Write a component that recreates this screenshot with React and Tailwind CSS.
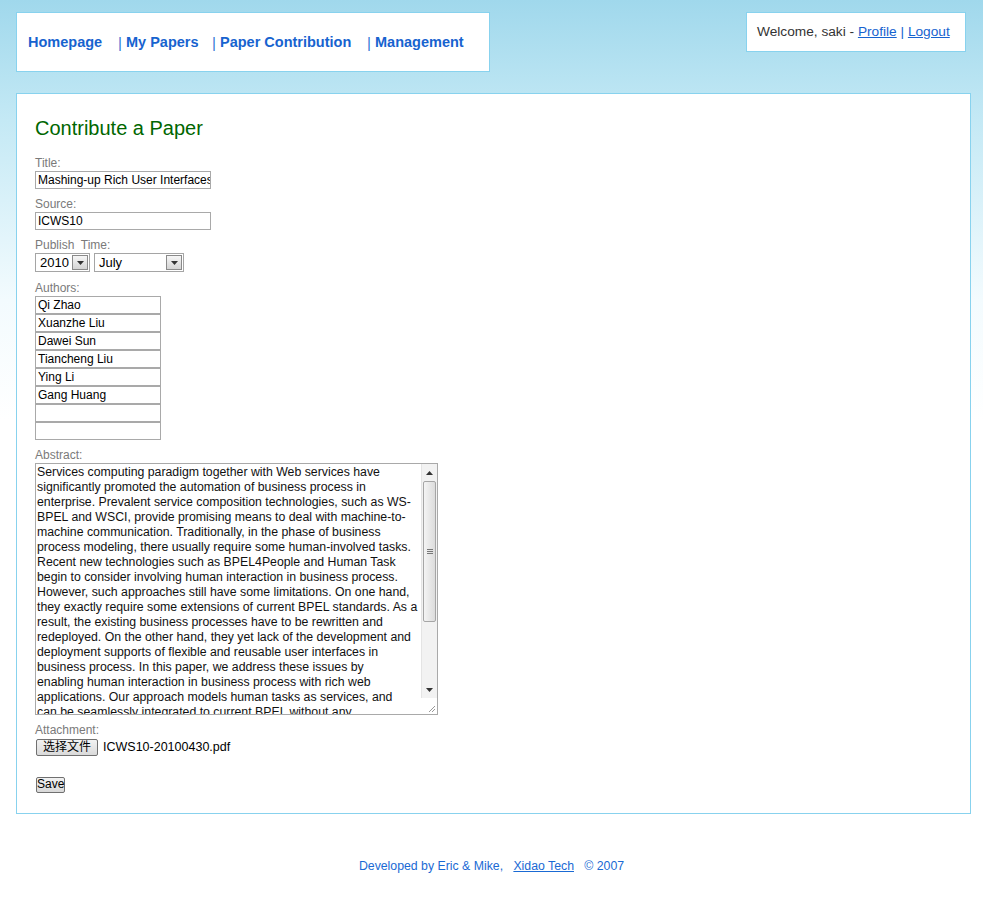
import React from "react";

const abstractLines = [
  "Services computing paradigm together with Web services have",
  "significantly promoted the automation of business process in",
  "enterprise. Prevalent service composition technologies, such as WS-",
  "BPEL and WSCI, provide promising means to deal with machine-to-",
  "machine communication. Traditionally, in the phase of business",
  "process modeling, there usually require some human-involved tasks.",
  "Recent new technologies such as BPEL4People and Human Task",
  "begin to consider involving human interaction in business process.",
  "However, such approaches still have some limitations. On one hand,",
  "they exactly require some extensions of current BPEL standards. As a",
  "result, the existing business processes have to be rewritten and",
  "redeployed. On the other hand, they yet lack of the development and",
  "deployment supports of flexible and reusable user interfaces in",
  "business process. In this paper, we address these issues by",
  "enabling human interaction in business process with rich web",
  "applications. Our approach models human tasks as services, and",
  "can be seamlessly integrated to current BPEL without any",
];

const authors = ["Qi Zhao", "Xuanzhe Liu", "Dawei Sun", "Tiancheng Liu", "Ying Li", "Gang Huang", "", ""];

const font = "font-['Liberation_Sans',Arial,'Noto_Sans_CJK_SC',sans-serif]";

// small label above each field
const Label = ({ children }) => (
  <div className="h-[16px] leading-[16px] text-[12px] text-[#7a7a7a]">{children}</div>
);

const TextBox = ({ value, w = "w-[176px]" }) => (
  <div className={`${w} h-[18px] border border-[#a9a9a9] bg-white pl-[2px] text-[12px] leading-[16px] text-black whitespace-nowrap overflow-hidden`}>
    {value}
  </div>
);

const Arrow = ({ up }) => (
  <svg width="7" height="4" viewBox="0 0 7 4">
    <path d={up ? "M0 4 L3.5 0 L7 4 Z" : "M0 0 L3.5 4 L7 0 Z"} fill="#333" />
  </svg>
);

const Select = ({ value, w }) => (
  <div className={`${w} h-[19px] border border-[#a5a5a5] bg-white flex items-center justify-between pl-[4px] pr-[1px]`}>
    <span className="text-[13px] leading-[17px] text-black">{value}</span>
    <div className="w-[16px] h-[15px] border border-[#8a8a8a] bg-[linear-gradient(#f6f6f6,#d4d4d4)] flex items-center justify-center">
      <Arrow />
    </div>
  </div>
);

const NavItem = ({ label, sep, w }) => (
  <div className={`${w} flex items-center`}>
    {sep && <span className="text-[15px] font-normal text-[#2f74d6] w-[8px]">|</span>}
    <a className="text-[14.5px] font-bold text-[#1763cf]">{label}</a>
  </div>
);

export default function App() {
  return (
    <div className={`${font} min-h-screen bg-[linear-gradient(to_bottom,#a0d8ec_0px,#c4e9f5_120px,#f3fbfe_300px,#ffffff_420px)] pt-[12px]`}>
      <div className="pl-[16px]">
        {/* top bar */}
        <div className="w-[950px] flex justify-between items-start">
          <div className="w-[474px] h-[60px] bg-white border border-[#88d2ee] flex items-center pl-[11px] pt-[2px]">
            <NavItem label="Homepage" w="w-[90px]" />
            <NavItem label="My Papers" sep w="w-[94px]" />
            <NavItem label="Paper Contribution" sep w="w-[155px]" />
            <NavItem label="Management" sep w="w-[110px]" />
          </div>
          <div className="w-[220px] h-[40px] bg-white border border-[#88d2ee] flex items-center pl-[10px] text-[13.7px] text-[#333]">
            <span>Welcome, saki -&nbsp;</span>
            <a className="underline text-[#1763cf]">Profile</a>
            <span className="text-[#1763cf]">&nbsp;|&nbsp;</span>
            <a className="underline text-[#1763cf]">Logout</a>
          </div>
        </div>

        {/* main panel */}
        <div className="mt-[21px] w-[955px] bg-white border border-[#88d2ee] pl-[18px] pt-[22px] pb-[18px]">
          <h1 className="text-[20px] leading-[24px] text-[#006600]">Contribute a Paper</h1>

          <div className="mt-[15px]">
            <Label>Title:</Label>
            <TextBox value="Mashing-up Rich User Interfaces" />
          </div>

          <div className="mt-[7px]">
            <Label>Source:</Label>
            <TextBox value="ICWS10" />
          </div>

          <div className="mt-[7px]">
            <Label>Publish&nbsp; Time:</Label>
            <div className="flex gap-[4px]">
              <Select value="2010" w="w-[55px]" />
              <Select value="July" w="w-[90px]" />
            </div>
          </div>

          <div className="mt-[8px]">
            <Label>Authors:</Label>
            <div className="flex flex-col">
              {authors.map((a, i) => (
                <TextBox key={i} value={a} w="w-[126px]" />
              ))}
            </div>
          </div>

          <div className="mt-[7px]">
            <Label>Abstract:</Label>
            <div className="w-[403px] h-[252px] border border-[#a9a9a9] bg-white flex">
              <div className="w-[385px] overflow-hidden pl-[1px] pt-[1px] text-[12.3px] leading-[15px] text-[#111]">
                {abstractLines.map((l, i) => (
                  <div key={i} className="whitespace-nowrap">{l}</div>
                ))}
              </div>
              {/* scrollbar */}
              <div className="w-[16px] flex flex-col">
                <div className="flex-1 flex flex-col bg-[#f2f2f2] border-l border-[#e4e4e4]">
                  <div className="h-[17px] flex items-center justify-center"><Arrow up /></div>
                  <div className="mx-[1px] h-[141px] rounded-[2px] border border-[#a6a6a6] bg-[linear-gradient(to_right,#f4f4f4,#dcdcdc)] flex items-center justify-center">
                    <div className="flex flex-col gap-[1px]">
                      <div className="w-[6px] h-[1px] bg-[#777]" />
                      <div className="w-[6px] h-[1px] bg-[#777]" />
                      <div className="w-[6px] h-[1px] bg-[#777]" />
                    </div>
                  </div>
                  <div className="flex-1" />
                  <div className="h-[17px] flex items-center justify-center"><Arrow /></div>
                </div>
                <div className="h-[16px] flex items-end justify-end pr-[1px] pb-[1px]">
                  <svg width="9" height="9" viewBox="0 0 9 9">
                    <path d="M8 2 L2 8 M8 5 L5 8" stroke="#999" strokeWidth="1" />
                  </svg>
                </div>
              </div>
            </div>
          </div>

          <div className="mt-[7px]">
            <Label>Attachment:</Label>
            <div className="flex items-center gap-[5px]">
              <button className="h-[17px] ml-[1px] px-[6px] border border-[#707070] rounded-[2px] bg-[linear-gradient(#f2f2f2,#dadada)] text-[12px] leading-[14px] text-black">
                选择文件
              </button>
              <span className="text-[12.5px] text-black">ICWS10-20100430.pdf</span>
            </div>
          </div>

          <button className="mt-[20px] ml-[1px] h-[16px] w-[29px] px-0 border border-[#707070] rounded-[2px] bg-[linear-gradient(#f2f2f2,#d8d8d8)] text-[12px] leading-[13px] text-black">
            Save
          </button>
        </div>
      </div>

      {/* footer */}
      <div className="w-full mt-[45px] text-center text-[12.3px] leading-[15px] text-[#1a6ad4]">
        Developed by Eric &amp; Mike,&nbsp;&nbsp; <a className="underline">Xidao Tech</a>&nbsp;&nbsp; © 2007
      </div>
    </div>
  );
}
